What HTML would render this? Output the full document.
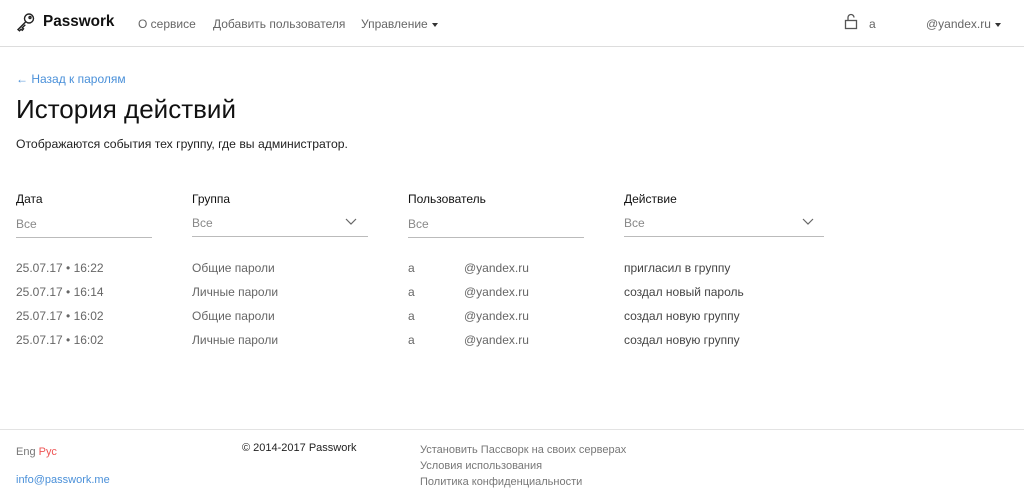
<!DOCTYPE html>
<html><head><meta charset="utf-8"><style>
*{margin:0;padding:0;box-sizing:border-box}
body{width:1024px;height:501px;background:#fff;font-family:"Liberation Sans","DejaVu Sans",sans-serif;color:#222;position:relative;overflow:hidden;font-size:12px}
.a{position:absolute;white-space:nowrap}
.hdr{position:absolute;left:0;top:0;width:1024px;height:47px;border-bottom:1px solid #ddd}
.g{color:#666}
.lbl{font-size:12px;color:#111}
.in{position:absolute;border-bottom:1px solid #bbb;height:26px;color:#888;font-size:12px}
.caret{display:inline-block;border-left:3.5px solid transparent;border-right:3.5px solid transparent;border-top:4px solid #333;vertical-align:middle;margin-left:4px}
</style></head><body>
<div class="hdr"></div>
<svg class="a" style="left:16px;top:12px" width="20" height="20" viewBox="0 0 20 20" fill="none" stroke="#222" stroke-width="1.4"><circle cx="13" cy="6.5" r="4.5"/><circle cx="14" cy="5.5" r="1"/><path d="M9.8 9.8L2 17.6l1.5 1.2 1.5-1.5 1.3 1 1.2-1.5-1.2-1 3-3"/></svg>
<div class="a" style="left:43px;top:13px;font-size:15.3px;font-weight:bold;color:#111">Passwork</div>
<div class="a g" style="left:138px;top:17px;font-size:12px">О сервисе</div>
<div class="a g" style="left:213px;top:17px;font-size:12px">Добавить пользователя</div>
<div class="a g" style="left:361px;top:17px;font-size:12px">Управление<span class="caret"></span></div>
<svg class="a" style="left:844px;top:13px" width="14" height="17" viewBox="0 0 14 17" fill="none" stroke="#555" stroke-width="1.3"><rect x="1.5" y="7.5" width="11" height="8"/><path d="M4 7.5V4.5a3 3 0 0 1 6 0"/></svg>
<div class="a g" style="left:869px;top:17px">a</div>
<div class="a g" style="left:926px;top:17px">@yandex.ru<span class="caret"></span></div>
<div class="a" style="left:16px;top:72px;color:#4a90d9">← Назад к паролям</div>
<div class="a" style="left:16px;top:94px;font-size:26px;color:#111">История действий</div>
<div class="a" style="left:16px;top:137px;font-size:12.2px;color:#222">Отображаются события тех группу, где вы администратор.</div>
<div class="a lbl" style="left:16px;top:192px">Дата</div>
<div class="a lbl" style="left:192px;top:192px">Группа</div>
<div class="a lbl" style="left:408px;top:192px">Пользователь</div>
<div class="a lbl" style="left:624px;top:192px">Действие</div>
<div class="in" style="left:16px;top:212px;width:136px;padding-top:5px">Все</div>
<div class="in" style="left:192px;top:211px;width:176px;padding-top:5px">Все</div>
<div class="in" style="left:408px;top:212px;width:176px;padding-top:5px">Все</div>
<div class="in" style="left:624px;top:211px;width:200px;padding-top:5px">Все</div>
<svg class="a" style="left:345px;top:218px" width="12" height="8"><path d="M1 1l5 5 5-5" fill="none" stroke="#666" stroke-width="1.2"/></svg>
<svg class="a" style="left:802px;top:218px" width="12" height="8"><path d="M1 1l5 5 5-5" fill="none" stroke="#666" stroke-width="1.2"/></svg>
<div class="a g" style="left:16px;top:256px;line-height:24px">25.07.17 • 16:22<br>25.07.17 • 16:14<br>25.07.17 • 16:02<br>25.07.17 • 16:02</div>
<div class="a g" style="left:192px;top:256px;line-height:24px">Общие пароли<br>Личные пароли<br>Общие пароли<br>Личные пароли</div>
<div class="a g" style="left:408px;top:256px;line-height:24px">a<br>a<br>a<br>a</div>
<div class="a g" style="left:464px;top:256px;line-height:24px">@yandex.ru<br>@yandex.ru<br>@yandex.ru<br>@yandex.ru</div>
<div class="a" style="left:624px;top:256px;line-height:24px;color:#444">пригласил в группу<br>создал новый пароль<br>создал новую группу<br>создал новую группу</div>
<div class="a" style="left:0;top:429px;width:1024px;border-top:1px solid #e3e3e3"></div>
<div class="a" style="left:16px;top:446px;font-size:11px;color:#777">Eng <span style="color:#e55">Рус</span></div>
<div class="a" style="left:16px;top:474px;font-size:11px;color:#4a90d9">info@passwork.me</div>
<div class="a" style="left:242px;top:442px;font-size:11px;color:#222">© 2014-2017 Passwork</div>
<div class="a" style="left:420px;top:442px;font-size:11px;color:#777;line-height:16px">Установить Пассворк на своих серверах<br>Условия использования<br>Политика конфиденциальности</div>
</body></html>
